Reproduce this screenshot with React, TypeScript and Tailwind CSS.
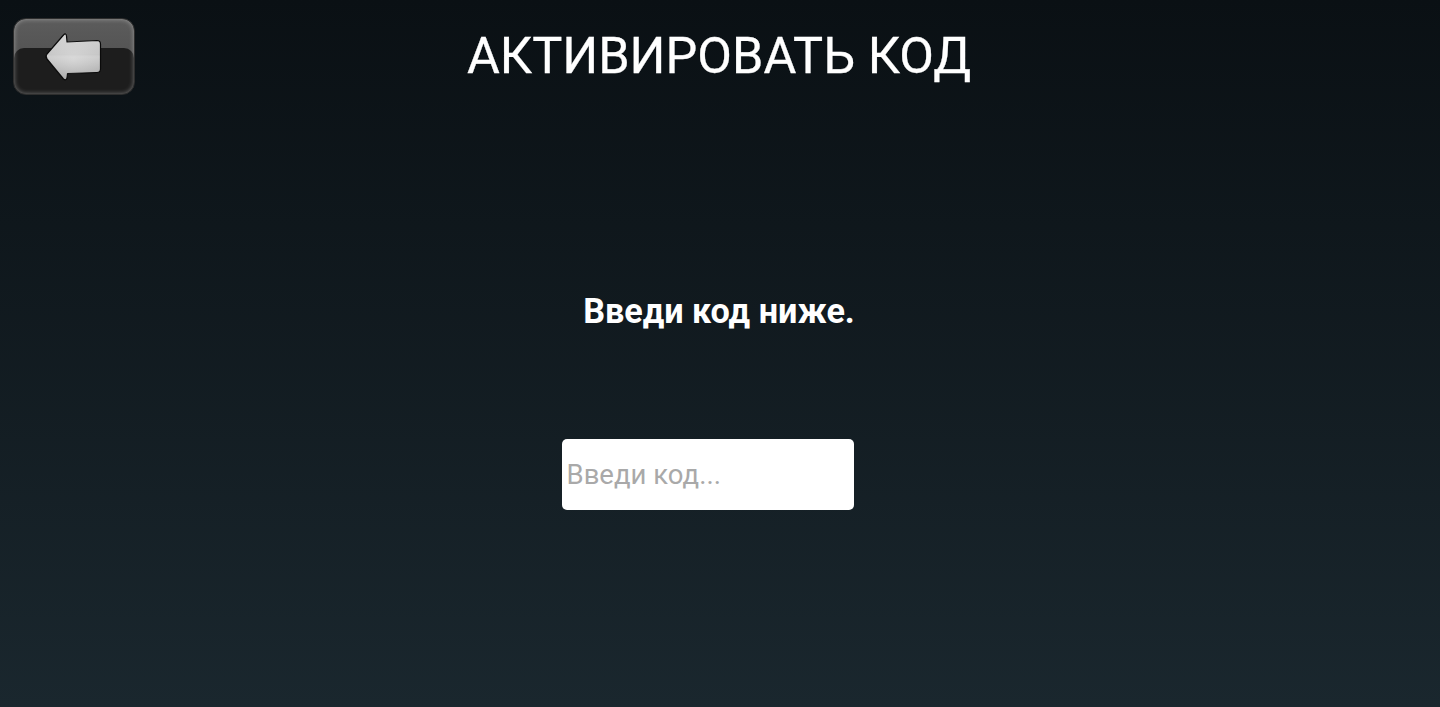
import React from 'react';

const BackArrow = () => (
  <svg width="60" height="50" viewBox="0 0 60 50" className="block">
    <defs>
      <linearGradient id="arrowFill" x1="0" y1="0" x2="0" y2="1">
        <stop offset="0" stopColor="#d4d4d4" />
        <stop offset="0.45" stopColor="#c6c6c6" />
        <stop offset="0.5" stopColor="#cdcdcd" />
        <stop offset="1" stopColor="#a9a9a9" />
      </linearGradient>
      <radialGradient id="arrowGlow" cx="0.5" cy="0.55" r="0.5">
        <stop offset="0" stopColor="#ffffff" stopOpacity="0.25" />
        <stop offset="1" stopColor="#ffffff" stopOpacity="0" />
      </radialGradient>
    </defs>
    <path
      id="arrowShape"
      d="M19.5 3 Q22 0.5 22.5 4 L23 10 L53 8.5 Q56.5 8.5 56.5 12 L56.5 37 Q56.5 40.5 53 40.5 L23.5 41.5 L23 46 Q22 49 19.5 47 L3 27 Q1 24.5 3 22 Z"
      fill="url(#arrowFill)"
      stroke="#0a0a0a"
      strokeWidth="1.2"
      strokeLinejoin="round"
    />
    <path
      d="M19.5 3 Q22 0.5 22.5 4 L23 10 L53 8.5 Q56.5 8.5 56.5 12 L56.5 37 Q56.5 40.5 53 40.5 L23.5 41.5 L23 46 Q22 49 19.5 47 L3 27 Q1 24.5 3 22 Z"
      fill="url(#arrowGlow)"
    />
  </svg>
);

export default function App() {
  return (
    <div
      className="flex flex-col h-[707px] overflow-hidden bg-gradient-to-b from-[#0a1014] to-[#1a272e] text-white"
      style={{ fontFamily: 'Roboto, sans-serif' }}
    >
      <div className="grid grid-cols-[1fr_auto_1fr] items-start pl-[13px] pr-[15px] pt-[18px]">
        <button className="relative w-[122px] h-[77px] rounded-[13px] border border-[#2e2e2e] overflow-hidden bg-gradient-to-b from-[#5c5c5c] to-[#4a4a4a] flex items-center justify-center">
          <span className="absolute top-[29px] left-0 right-0 bottom-0 rounded-t-[10px] bg-[#1d1d1d]" />
          <span className="absolute inset-0 rounded-[12px] shadow-[inset_0_0_5px_rgba(255,255,255,0.4)]" />
          <span className="relative">
            <BackArrow />
          </span>
        </button>
        <h1 className="text-[50.4px] leading-[58px] font-normal whitespace-nowrap mt-[9px] [-webkit-text-stroke:0.3px_white]">АКТИВИРОВАТЬ КОД</h1>
        <div />
      </div>

      <div className="flex flex-col items-center mt-[196px]">
        <p className="text-[34.2px] leading-[40px] font-bold mr-[2px]">Введи код ниже.</p>
        <div className="w-[292px] mt-[108px] mr-[25px]">
          <input
            placeholder="Введи код..."
            className="w-full h-[71px] rounded-[5px] bg-white px-[5px] text-[27.5px] text-black placeholder:text-[#a9a9a9] outline-none"
          />
        </div>
      </div>
    </div>
  );
}
